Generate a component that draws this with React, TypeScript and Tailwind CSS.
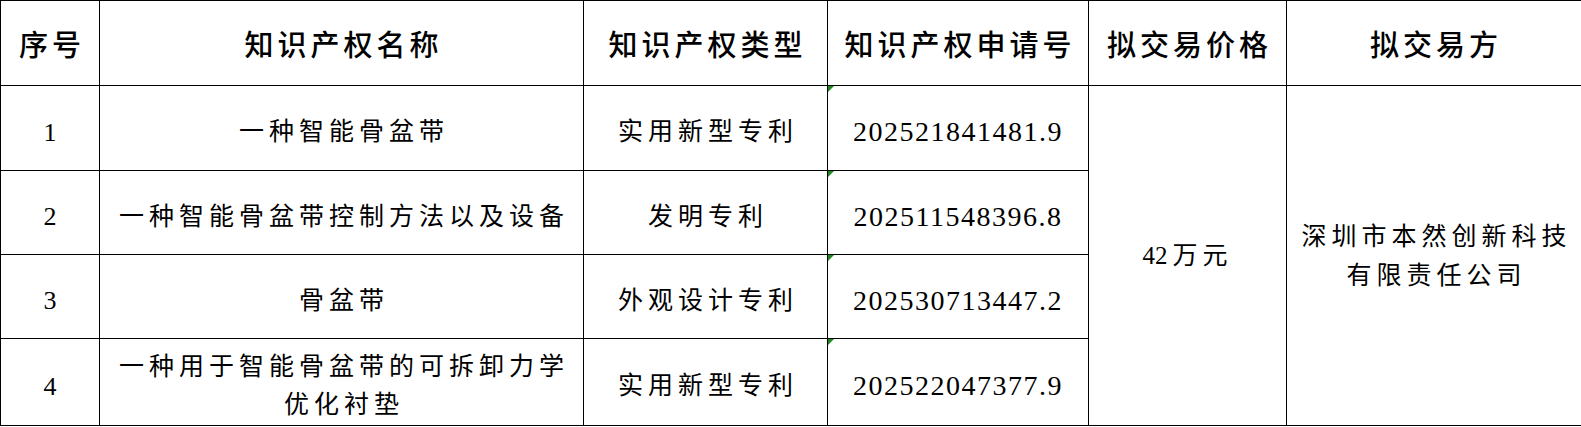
import React from "react";

type Row = {
  no: string;
  name: string[];
  kind: string;
  appNo: string;
};

const rows: Row[] = [
  { no: "1", name: ["一种智能骨盆带"], kind: "实用新型专利", appNo: "202521841481.9" },
  { no: "2", name: ["一种智能骨盆带控制方法以及设备"], kind: "发明专利", appNo: "202511548396.8" },
  { no: "3", name: ["骨盆带"], kind: "外观设计专利", appNo: "202530713447.2" },
  { no: "4", name: ["一种用于智能骨盆带的可拆卸力学", "优化衬垫"], kind: "实用新型专利", appNo: "202522047377.9" },
];

const rowHeights = ["h-[85px]", "h-[84px]", "h-[84px]", "h-[87px]"];

const font = { fontFamily: '"Liberation Serif", "Noto Sans CJK SC", serif' };

const Marker = () => (
  <span className="absolute left-0 top-0 w-0 h-0 border-t-[6px] border-r-[6px] border-t-[#1e8a1e] border-r-transparent" />
);

export default function App() {
  const th = "border border-black text-center align-middle pt-2 text-[29px] font-medium tracking-[4px] pl-[4px] text-black";
  const td = "border border-black text-center align-middle pt-2 text-[25px] tracking-[5px] pl-[5px] text-black";

  return (
    <div className="w-[1581px] h-[427px] bg-white" style={font}>
      <table className="border-collapse table-fixed w-[1581px] border-black">
        <colgroup>
          <col className="w-[99px]" />
          <col className="w-[484px]" />
          <col className="w-[244px]" />
          <col className="w-[261px]" />
          <col className="w-[198px]" />
          <col className="w-[295px]" />
        </colgroup>
        <thead>
          <tr className="h-[85px]">
            <th className={th}>序号</th>
            <th className={th}>知识产权名称</th>
            <th className={th}>知识产权类型</th>
            <th className={th}>知识产权申请号</th>
            <th className={th}>拟交易价格</th>
            <th className={th}>拟交易方</th>
          </tr>
        </thead>
        <tbody>
          {rows.map((r, i) => (
            <tr key={r.no} className={rowHeights[i]}>
              <td className="border border-black text-center align-middle pt-2 text-[26px] text-black">{r.no}</td>
              <td className={td + " leading-[38px]"}>
                {r.name.map((line) => (
                  <div key={line}>{line}</div>
                ))}
              </td>
              <td className={td}>{r.kind}</td>
              <td className="relative border border-black text-center align-middle pt-2 text-[28px] tracking-[1.5px] text-black">
                <Marker />
                {r.appNo}
              </td>
              {i === 0 && (
                <>
                  <td rowSpan={4} className="border border-black text-center align-middle text-[25px] text-black">
                    42<span className="tracking-[5px] pl-[5px]">万元</span>
                  </td>
                  <td rowSpan={4} className="border border-black text-center align-middle text-[25px] tracking-[5px] pl-[5px] leading-[39px] text-black">
                    <div>深圳市本然创新科技</div>
                    <div>有限责任公司</div>
                  </td>
                </>
              )}
            </tr>
          ))}
        </tbody>
      </table>
    </div>
  );
}
